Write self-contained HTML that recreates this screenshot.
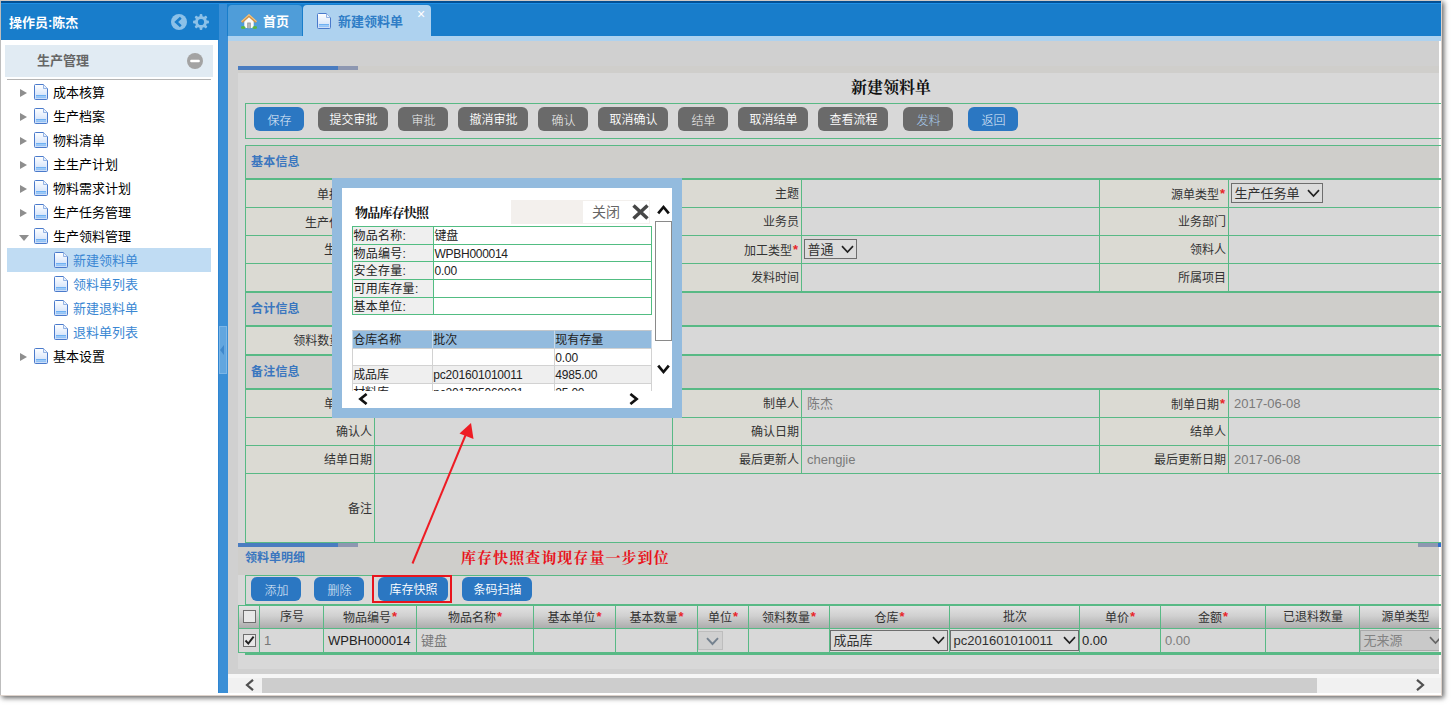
<!DOCTYPE html>
<html lang="zh-CN">
<head>
<meta charset="utf-8">
<title>新建领料单</title>
<style>
*{box-sizing:border-box;margin:0;padding:0}
html,body{width:1451px;height:705px;overflow:hidden;background:#fff}
body{font-family:"Liberation Sans","Noto Sans CJK SC",sans-serif;font-size:12px;color:#333;position:relative}
.abs{position:absolute}
#win{position:absolute;left:0;top:0;width:1442px;height:696px;background:#fff;overflow:hidden;border-right:1px solid #ddd2cb;border-bottom:1px solid #ddd2cb;box-shadow:2px 2px 5px rgba(0,0,0,.6)}
/* top frame lines */
#topline0{left:0;top:0;width:1441px;height:1px;background:#d0c9c5}
#topline1{left:0;top:1px;width:1441px;height:2px;background:#034f93}
#topline2{left:0;top:3px;width:1441px;height:1px;background:#1e8fe6}
#leftline{left:0;top:1px;width:1px;height:694px;background:#bdbdbd}
/* sidebar */
#sbhead{left:1px;top:4px;width:218px;height:36px;background:#187dcb;z-index:1}
#sbhead .t{position:absolute;left:8px;top:8.6px;font-size:13px;font-weight:bold;color:#fff;line-height:20px}
#strip{left:218px;top:4px;width:10px;height:689px;background:#3b8fd6;border-left:1px solid #2f85d1}
#stripline{left:227px;top:4px;width:2px;height:32px;background:#187dcb}
#handle{left:219px;top:326px;width:8px;height:48px;background:#62a6df;border:1px solid #7db6e6}
#acc{left:5px;top:45px;width:208px;height:32px;background:#e1ebf3}
#acc .t{position:absolute;left:32px;top:6px;font-size:13px;font-weight:bold;color:#666;line-height:20px}
#accline{left:7px;top:79px;width:204px;height:1px;background:#b5b5b5}
.tr{position:absolute;left:1px;width:217px;height:24px;font-size:13px;line-height:24px;color:#000}
.tr .ar{position:absolute;left:19px;top:7.5px;width:0;height:0;border-left:7px solid #8e8e8e;border-top:4.7px solid transparent;border-bottom:4.7px solid transparent}
.tr .ad{position:absolute;left:18px;top:9.5px;width:0;height:0;border-top:6.5px solid #8e8e8e;border-left:5px solid transparent;border-right:5px solid transparent}
.tr svg{position:absolute;top:3px}
.tr .tx{position:absolute;top:0}
.tr.l1 svg{left:33px}.tr.l1 .tx{left:52px}
.tr.l2 svg{left:53px}.tr.l2 .tx{left:72px;color:#3a87d3}
.tr.sel{left:7px;width:204px;background:#c0dcf3;margin-top:-1px}
.tr.sel svg{top:4px}.tr.sel .tx{top:1px}
.tr.sel svg{left:47px}.tr.sel .tx{left:66px}
/* tab bar */
#tabbar{left:229px;top:4px;width:1212px;height:32px;background:#187dcb}
#tabstrip{left:228px;top:36px;width:1213px;height:5px;background:#aed2ef}
#tab1{left:228px;top:5px;width:74px;height:31px;background:#4f9dd9;border-radius:4px 4px 0 0}
#tab1 .t{position:absolute;left:35px;top:6.5px;font-size:13px;font-weight:bold;color:#fff;line-height:20px}
#tab2{left:303px;top:5px;width:128px;height:32px;background:#aed2ef;border-radius:4px 4px 0 0}
#tab2 .t{position:absolute;left:35px;top:6.5px;font-size:13px;font-weight:bold;color:#2f7dc6;line-height:20px}
#tab2 .x{position:absolute;left:114px;top:1px;font-size:14px;color:#fff;line-height:16px}
/* content */
#content{left:228px;top:41px;width:1211px;height:633px;background:#d0d0d0}
#inner{left:238px;top:66px;width:1201px;height:603px;background:#d8d8d8}
/* main */
#bar1a,#bar2a{background:#4a7cc0}#bar1b,#bar2b{background:#8d97b1}
#bar1c{left:238px;top:66px;width:1201px;height:7px;background:#cfcecb}
#title{left:791px;top:76px;width:200px;text-align:center;font:bold 16px/24px "Liberation Serif","Noto Serif CJK SC",serif;color:#111}
.gb{border:1px solid #58b985}
#tb1{left:245px;top:103px;width:1200px;height:36px}
.btn{position:absolute;height:24px;border-radius:6px;color:#f2f2f2;font-size:12px;font-weight:300;line-height:27px;text-align:center;text-indent:1px}
.btn.b{background:#2b77c2}.btn.g{background:#6a6a6a}
.btn{color:#fff;font-weight:350}.btn.s{font-weight:300;line-height:29px;color:#f0f0f0}.btn.b.s{color:#e2eefa}
.sec{position:absolute;left:245px;width:1200px;background:#cfcecb;border:1px solid #58b985}
.sec span{position:absolute;left:5px;top:8px;font-size:12px;font-weight:bold;color:#3a76bf;line-height:16px;letter-spacing:0.2px}
.row{position:absolute;left:245px;width:1200px;border-top:1px solid #58b985}
.c{position:absolute;top:0;height:100%;border-left:1px solid #58b985}
.c.l{background:#dbdad3;text-align:right;padding-right:2px;padding-top:1px;font-size:12px;color:#333;width:129px}
.c.v{background:#d8d8d8;width:298px;padding-left:5px;font-size:13px;color:#7a7a7a}
.c.l i,.th i{font-style:normal;color:#e8262a;font-weight:bold;display:inline-block;width:7px;text-align:center;font-size:13px;position:relative;top:-1px}
.sl{position:absolute;border:1px solid #6e6e6e;background:#dcdcdc;font-size:13px;color:#303030;line-height:19.5px;padding-left:2.5px;height:20px}
.sl svg{position:absolute;right:2px;top:5px}
.hl{position:absolute;left:245px;width:1200px;height:2px;background:#58b985}
#grid{}
#rstrip i{position:absolute;left:0;width:2px;background:#58b985}
.th{position:absolute;top:0;height:24px;border:1px solid #58b985;border-width:1px 0 1px 1px;background:linear-gradient(#e2e2e2,#d0d0d0 45%,#adadad);text-align:center;font-size:12px;color:#333;line-height:23px;white-space:nowrap;overflow:hidden}
.td{position:absolute;top:24px;height:24px;border:1px solid #58b985;border-width:0 0 1px 1px;background:#d8d8d8;font-size:13px;line-height:23px;padding-left:4px;white-space:nowrap;overflow:hidden}
.cb{position:absolute;width:13px;height:13px;border:1px solid #6e6e6e;background:#e8e8e8}
.cb svg{position:absolute;left:0;top:0}
#pop{left:332px;top:178px;width:350px;height:240px;background:#93bbde}
#popin{position:absolute;left:10px;top:10px;width:330px;height:220px;background:#fff;overflow:hidden}
.ptitle{position:absolute;left:13px;top:14.5px;font:bold 13px/20px "Liberation Serif","Noto Serif CJK SC",serif;color:#111;letter-spacing:-0.8px}
.pbeige{position:absolute;left:169px;top:12px;width:139px;height:24px;border:1px solid #f3f0ed;border-left:72px solid #f3f0ed}
.pclose{position:absolute;left:250px;top:14px;font-size:14px;line-height:20px;color:#666}
.pt1{position:absolute;left:10px;top:38px;width:300px;height:89px;font-size:12px;color:#222}
.pt1 .r{position:absolute;left:0;width:300px;border:1px solid #52bd82;line-height:16px}
.pt1 .k{position:absolute;left:0;top:0;bottom:0;width:81px;background:#efefef;border-right:1px solid #52bd82;padding:1px 0 0 0.4px;letter-spacing:0.3px;white-space:nowrap}
.pt1 .v{position:absolute;left:81px;top:0;bottom:0;padding:1px 0 0 0.6px;white-space:nowrap;letter-spacing:-0.3px}
.pt2wrap{position:absolute;left:10px;top:142px;width:300px;height:61px;overflow:hidden;font-size:12px;color:#222}
.r2{position:absolute;left:0;width:300px}
.r2 span{position:absolute;top:0;height:100%;border:1px solid #d2d2d2;padding:1px 0 0 0.3px;line-height:16px;white-space:nowrap;letter-spacing:-0.2px;background:#fff}
.r2.alt span{background:#efefef}
.r2.h span{padding-top:1px;background:#93bbde;border-color:#c2c6ca #c9d9e8 #93bbde #c9d9e8;letter-spacing:0}
.vsb{position:absolute;left:313px;top:0;width:17px;height:203px;background:#fff}
.vsb .thumb{position:absolute;left:0;top:33px;width:17px;height:120px;border:1px solid #8a8a8a;background:#fff}
</style>
</head>
<body>
<div id="win">
<div class="abs" id="sbhead"><span class="t">操作员:陈杰</span>
<svg class="abs" style="left:170px;top:10px" width="16" height="16" viewBox="0 0 16 16"><circle cx="8" cy="8" r="8" fill="#8cc1e8"/><path d="M9.8 3.8 L5.2 8 L9.8 12.2" fill="none" stroke="#187dcb" stroke-width="2.6"/></svg>
<svg class="abs" style="left:192px;top:10px" width="16" height="16" viewBox="0 0 16 16"><g fill="#8cc1e8"><circle cx="8" cy="8" r="6"/><g id="gt"><rect x="6.6" y="0" width="2.8" height="16" rx="1"/><rect x="6.6" y="0" width="2.8" height="16" rx="1" transform="rotate(45 8 8)"/><rect x="6.6" y="0" width="2.8" height="16" rx="1" transform="rotate(90 8 8)"/><rect x="6.6" y="0" width="2.8" height="16" rx="1" transform="rotate(135 8 8)"/></g></g><circle cx="8" cy="8" r="3.1" fill="#187dcb"/></svg>
</div>
<div class="abs" id="strip"></div><div class="abs" id="stripline"></div><div class="abs" id="handle"><i style="position:absolute;left:0px;top:18px;border-right:4px solid #3f88cc;border-top:5px solid transparent;border-bottom:5px solid transparent"></i></div>
<div class="abs" id="acc"><span class="t">生产管理</span>
<svg class="abs" style="left:182px;top:8px" width="16" height="16" viewBox="0 0 16 16"><circle cx="8" cy="8" r="8" fill="#a3a3a3"/><rect x="3.2" y="6.8" width="9.6" height="2.4" rx="1" fill="#fff"/></svg>
</div>
<div class="abs" id="accline"></div>
<!--TREE-->
<svg width="0" height="0" style="position:absolute"><defs><linearGradient id="fg" x1="0" y1="0" x2="0" y2="1"><stop offset="0" stop-color="#ffffff"/><stop offset="1" stop-color="#c9dcf8"/></linearGradient><symbol id="fi" viewBox="0 0 14 16"><path d="M1.5 0.5 H9.5 L13.5 4.5 V14.5 Q13.5 15.5 12.5 15.5 H1.5 Q0.5 15.5 0.5 14.5 V1.5 Q0.5 0.5 1.5 0.5 Z" fill="url(#fg)" stroke="#4a7acb" stroke-width="1"/><path d="M9.5 0.5 V4.5 H13.5" fill="#e8f0fc" stroke="#7ea3de" stroke-width="0.8"/><rect x="2" y="11" width="10" height="2.6" fill="#6fb0f2"/><rect x="2" y="12" width="10" height="0.8" fill="#a9d2fa"/></symbol></defs></svg>
<div class="tr l1" style="top:81px"><i class="ar"></i><svg width="14" height="16"><use href="#fi"/></svg><span class="tx">成本核算</span></div>
<div class="tr l1" style="top:105px"><i class="ar"></i><svg width="14" height="16"><use href="#fi"/></svg><span class="tx">生产档案</span></div>
<div class="tr l1" style="top:129px"><i class="ar"></i><svg width="14" height="16"><use href="#fi"/></svg><span class="tx">物料清单</span></div>
<div class="tr l1" style="top:153px"><i class="ar"></i><svg width="14" height="16"><use href="#fi"/></svg><span class="tx">主生产计划</span></div>
<div class="tr l1" style="top:177px"><i class="ar"></i><svg width="14" height="16"><use href="#fi"/></svg><span class="tx">物料需求计划</span></div>
<div class="tr l1" style="top:201px"><i class="ar"></i><svg width="14" height="16"><use href="#fi"/></svg><span class="tx">生产任务管理</span></div>
<div class="tr l1" style="top:225px"><i class="ad"></i><svg width="14" height="16"><use href="#fi"/></svg><span class="tx">生产领料管理</span></div>
<div class="tr l2 sel" style="top:249px"><svg width="14" height="16"><use href="#fi"/></svg><span class="tx">新建领料单</span></div>
<div class="tr l2" style="top:273px"><svg width="14" height="16"><use href="#fi"/></svg><span class="tx">领料单列表</span></div>
<div class="tr l2" style="top:297px"><svg width="14" height="16"><use href="#fi"/></svg><span class="tx">新建退料单</span></div>
<div class="tr l2" style="top:321px"><svg width="14" height="16"><use href="#fi"/></svg><span class="tx">退料单列表</span></div>
<div class="tr l1" style="top:345px"><i class="ar"></i><svg width="14" height="16"><use href="#fi"/></svg><span class="tx">基本设置</span></div>
<!--/TREE-->
<div class="abs" id="tabbar"></div>
<div class="abs" id="tabstrip"></div>
<div class="abs" id="tab1"><svg class="abs" style="left:13px;top:9px" width="16" height="15" viewBox="0 0 16 15"><path d="M3.3 6.5 L8 2.6 L12.7 6.5 V14 H3.3 Z" fill="#fbfbfb"/><rect x="6.3" y="8.6" width="3.4" height="5.6" fill="#8a8a8a"/><rect x="7.1" y="9.3" width="1.8" height="4.9" fill="#b9b9b9"/><path d="M8 0 L16 7.2 L14.4 8.9 L8 3.3 L1.6 8.9 L0 7.2 Z" fill="#cf9247"/><path d="M8 0 L16 7.2 L15.3 8 L8 1.6 L0.7 8 L0 7.2 Z" fill="#ecc488"/><ellipse cx="2.2" cy="13.4" rx="2.4" ry="1.5" fill="#5bb545"/><ellipse cx="13.8" cy="13.4" rx="2.4" ry="1.5" fill="#5bb545"/></svg><span class="t">首页</span></div>
<div class="abs" id="tab2"><svg class="abs" style="left:14px;top:8px" width="14" height="16"><use href="#fi"/></svg><span class="t">新建领料单</span><span class="x">×</span></div>
<div class="abs" id="content"></div>
<div class="abs" id="inner"></div>
<!--MAIN-->
<div class="abs" id="bar1c"></div><div class="abs" id="bar1a" style="left:238px;top:66px;width:100px;height:4px"></div><div class="abs" id="bar1b" style="left:338px;top:66px;width:20px;height:4px"></div>
<div class="abs" id="title">新建领料单</div>
<div class="abs gb" id="tb1"></div>
<div class="btn b s" style="left:254px;top:107px;width:50px">保存</div>
<div class="btn g" style="left:318px;top:107px;width:70px">提交审批</div>
<div class="btn g s" style="left:398px;top:107px;width:50px">审批</div>
<div class="btn g" style="left:458px;top:107px;width:70px">撤消审批</div>
<div class="btn g s" style="left:538px;top:107px;width:50px">确认</div>
<div class="btn g" style="left:598px;top:107px;width:70px">取消确认</div>
<div class="btn g s" style="left:678px;top:107px;width:50px">结单</div>
<div class="btn g" style="left:738px;top:107px;width:70px">取消结单</div>
<div class="btn g" style="left:818px;top:107px;width:70px">查看流程</div>
<div class="btn g s" style="left:903px;top:107px;width:50px;color:#a9cdf0">发料</div>
<div class="btn b s" style="left:968px;top:107px;width:50px">返回</div>

<div class="sec" style="top:145px;height:34px"><span>基本信息</span></div>
<div class="row" style="top:179px;height:28px;line-height:27px"><div class="c l" style="left:0px">单据编号<i>*</i></div><div class="c v" style="left:129px;"></div><div class="c l" style="left:427px">主题</div><div class="c v" style="left:556px;"></div><div class="c l" style="left:854px">源单类型<i>*</i></div><div class="c v" style="left:983px;"><div class="sl" style="left:2px;top:3px;width:92px">生产任务单<svg width="13" height="9" viewBox="0 0 13 9"><path d="M1 1.2 L6.5 7 L12 1.2" fill="none" stroke="#222" stroke-width="1.7"/></svg></div></div></div>
<div class="row" style="top:207px;height:28px;line-height:27px"><div class="c l" style="left:0px">生产任务单<i>*</i></div><div class="c v" style="left:129px;"></div><div class="c l" style="left:427px">业务员</div><div class="c v" style="left:556px;"></div><div class="c l" style="left:854px">业务部门</div><div class="c v" style="left:983px;"></div></div>
<div class="row" style="top:235px;height:28px;line-height:27px"><div class="c l" style="left:0px">生产部门</div><div class="c v" style="left:129px;"></div><div class="c l" style="left:427px">加工类型<i>*</i></div><div class="c v" style="left:556px;"><div class="sl" style="left:2px;top:3px;width:53px">普通<svg width="13" height="9" viewBox="0 0 13 9"><path d="M1 1.2 L6.5 7 L12 1.2" fill="none" stroke="#222" stroke-width="1.7"/></svg></div></div><div class="c l" style="left:854px">领料人</div><div class="c v" style="left:983px;"></div></div>
<div class="row" style="top:263px;height:28px;line-height:27px"><div class="c l" style="left:0px">发料人</div><div class="c v" style="left:129px;"></div><div class="c l" style="left:427px">发料时间</div><div class="c v" style="left:556px;"></div><div class="c l" style="left:854px">所属项目</div><div class="c v" style="left:983px;"></div></div>
<div class="hl" style="top:291px"></div>
<div class="sec" style="top:292px;height:34px"><span>合计信息</span></div>
<div class="row" style="top:326px;height:28px;line-height:27px"><div class="c l" style="left:0px">领料数量合计:&nbsp;</div><div class="c v" style="left:129px;width:1100px;"></div></div>
<div class="hl" style="top:354px"></div>
<div class="sec" style="top:355px;height:34px"><span>备注信息</span></div>
<div class="row" style="top:389px;height:28px;line-height:27px"><div class="c l" style="left:0px">单据状态</div><div class="c v" style="left:129px;"></div><div class="c l" style="left:427px">制单人</div><div class="c v" style="left:556px;">陈杰</div><div class="c l" style="left:854px">制单日期<i>*</i></div><div class="c v" style="left:983px;">2017-06-08</div></div>
<div class="row" style="top:417px;height:28px;line-height:27px"><div class="c l" style="left:0px">确认人</div><div class="c v" style="left:129px;"></div><div class="c l" style="left:427px">确认日期</div><div class="c v" style="left:556px;"></div><div class="c l" style="left:854px">结单人</div><div class="c v" style="left:983px;"></div></div>
<div class="row" style="top:445px;height:28px;line-height:27px"><div class="c l" style="left:0px">结单日期</div><div class="c v" style="left:129px;"></div><div class="c l" style="left:427px">最后更新人</div><div class="c v" style="left:556px;">chengjie</div><div class="c l" style="left:854px">最后更新日期</div><div class="c v" style="left:983px;">2017-06-08</div></div>
<div class="row" style="top:473px;height:70px;line-height:69px"><div class="c l" style="left:0px">备注</div><div class="c v" style="left:129px;width:1100px;"></div></div>
<div class="row" style="top:542px;height:1px"></div>
<div class="abs" id="dhead" style="left:238px;top:543px;width:1201px;height:32px;background:#cfcecb"><span style="position:absolute;left:7px;top:7px;font-size:12px;font-weight:bold;color:#3a76bf;line-height:16px">领料单明细</span></div>
<div class="abs" id="bar2a" style="left:238px;top:543px;width:100px;height:4px"></div><div class="abs" id="bar2b" style="left:338px;top:543px;width:20px;height:4px"></div>

<div class="abs" id="note" style="left:461px;top:546.6px;font:bold 15px/22px 'Liberation Serif','Noto Serif CJK SC',serif;color:#e8141c;letter-spacing:1.05px;white-space:nowrap">库存快照查询现存量一步到位</div>
<div class="abs gb" style="left:245px;top:575px;width:1200px;height:30px;background:#d8d8d8"></div>
<div class="btn b s" style="left:251px;top:577px;width:50px">添加</div>
<div class="btn b s" style="left:314px;top:577px;width:50px">删除</div>
<div class="btn b" style="left:378px;top:577px;width:70px">库存快照</div>
<div class="btn b" style="left:462px;top:577px;width:70px">条码扫描</div>
<div class="abs" style="left:372px;top:575px;width:80px;height:28px;border:2px solid #e8141c"></div>
<div class="abs" id="grid" style="left:238px;top:605px;width:1210px;height:48px">
<div class="th" style="left:0px;width:22px"></div>
<div class="th" style="left:21px;width:65px">序号</div>
<div class="th" style="left:85px;width:94px">物品编号<i>*</i></div>
<div class="th" style="left:178px;width:118px">物品名称<i>*</i></div>
<div class="th" style="left:295px;width:83px">基本单位<i>*</i></div>
<div class="th" style="left:377px;width:83px">基本数量<i>*</i></div>
<div class="th" style="left:459px;width:52px">单位<i>*</i></div>
<div class="th" style="left:510px;width:82px">领料数量<i>*</i></div>
<div class="th" style="left:591px;width:121px">仓库<i>*</i></div>
<div class="th" style="left:711px;width:131px">批次</div>
<div class="th" style="left:841px;width:82px">单价<i>*</i></div>
<div class="th" style="left:922px;width:106px">金额<i>*</i></div>
<div class="th" style="left:1027px;width:95px">已退料数量</div>
<div class="th" style="left:1121px;width:92px">源单类型</div>
<div class="td" style="left:0px;width:22px"></div>
<div class="td" style="left:21px;width:65px"><span style="color:#777">1</span></div>
<div class="td" style="left:85px;width:94px"><span style="color:#222">WPBH000014</span></div>
<div class="td" style="left:178px;width:118px"><span style="color:#777">键盘</span></div>
<div class="td" style="left:295px;width:83px"></div>
<div class="td" style="left:377px;width:83px"></div>
<div class="td" style="left:459px;width:52px"></div>
<div class="td" style="left:510px;width:82px"></div>
<div class="td" style="left:591px;width:121px"></div>
<div class="td" style="left:711px;width:131px"></div>
<div class="td" style="left:841px;width:82px"><span style="color:#222;margin-left:-2px">0.00</span></div>
<div class="td" style="left:922px;width:106px"><span style="color:#7d7d7d">0.00</span></div>
<div class="td" style="left:1027px;width:95px"></div>
<div class="td" style="left:1121px;width:92px"></div>
<div class="cb" style="left:5px;top:5px"></div>
<div class="cb" style="left:5px;top:29px"><svg width="11" height="11" viewBox="0 0 11 11"><path d="M1.5 5.5 L4.3 8.6 L9.6 1.6" fill="none" stroke="#222" stroke-width="1.9"/></svg></div>
<div class="sl" style="left:460px;top:26px;width:25px;height:19px;background:#d0d0d0;border-color:#bdbdbd"><svg style="right:3px;top:5px" width="13" height="9" viewBox="0 0 13 9"><path d="M1 1.2 L6.5 7 L12 1.2" fill="none" stroke="#75828f" stroke-width="1.9"/></svg></div>
<div class="sl" style="left:592px;top:25px;width:118px;height:21px;line-height:19px;background:#dcdcdc">成品库<svg width="13" height="9" viewBox="0 0 13 9"><path d="M1 1.2 L6.5 7 L12 1.2" fill="none" stroke="#222" stroke-width="1.7"/></svg></div>
<div class="sl" style="left:712px;top:25px;width:129px;height:21px;line-height:19px;background:#dcdcdc">pc201601010011<svg width="13" height="9" viewBox="0 0 13 9"><path d="M1 1.2 L6.5 7 L12 1.2" fill="none" stroke="#222" stroke-width="1.7"/></svg></div>
<div class="sl" style="left:1122px;top:25px;width:95px;height:21px;line-height:19px;background:#c9c9c9;border-color:#aaa;color:#838383">无来源<svg style="right:12px" width="13" height="9" viewBox="0 0 13 9"><path d="M1 1.2 L6.5 7 L12 1.2" fill="none" stroke="#666" stroke-width="1.7"/></svg></div>
</div>
<div class="hl" style="top:653px;height:2px"></div>
<div class="abs" id="hsb" style="left:228px;top:674px;width:1213px;height:19px;background:#f1f1f1;border-top:4px solid #f6f6f6"><div style="position:absolute;left:34px;top:0;width:1055px;height:15px;background:#cdcdcd"></div><svg style="position:absolute;left:17px;top:1px" width="9" height="12" viewBox="0 0 9 12"><path d="M8 0.8 L2 6 L8 11.2" fill="none" stroke="#505050" stroke-width="2.2"/></svg><svg style="position:absolute;left:1188px;top:1px" width="9" height="12" viewBox="0 0 9 12"><path d="M1 0.8 L7 6 L1 11.2" fill="none" stroke="#505050" stroke-width="2.2"/></svg></div>
<svg class="abs" style="left:400px;top:415px" width="90" height="155" viewBox="400 415 90 155"><line x1="412.5" y1="563.5" x2="466" y2="434" stroke="#ee1c24" stroke-width="2"/><path d="M471 423 L459.5 433.5 L473.5 439 Z" fill="#ee1c24"/></svg>
<div class="abs" id="pop">
<div id="popin">
<div class="ptitle">物品库存快照</div>
<div class="pbeige"></div>
<div class="pclose">关闭</div>
<svg class="abs" style="left:290px;top:16px" width="17" height="16" viewBox="0 0 17 16"><path d="M1.5 1.5 L15.5 14.5 M15.5 1.5 L1.5 14.5" stroke="#464646" stroke-width="3.5" fill="none"/></svg>
<div class="pt1"><div class="r" style="top:0px;height:19px"><span class="k">物品名称:</span><span class="v">键盘</span></div><div class="r" style="top:18px;height:18px"><span class="k">物品编号:</span><span class="v">WPBH000014</span></div><div class="r" style="top:35px;height:19px"><span class="k">安全存量:</span><span class="v">0.00</span></div><div class="r" style="top:53px;height:19px"><span class="k">可用库存量:</span><span class="v"></span></div><div class="r" style="top:71px;height:18px"><span class="k">基本单位:</span><span class="v"></span></div></div>
<div class="pt2wrap"><div class="r2 h" style="top:0px;height:19px"><span style="left:0;width:81px">仓库名称</span><span style="left:80px;width:123px">批次</span><span style="left:202px;width:98px">现有存量</span></div><div class="r2 " style="top:18px;height:18px"><span style="left:0;width:81px"></span><span style="left:80px;width:123px"></span><span style="left:202px;width:98px">0.00</span></div><div class="r2 alt" style="top:35px;height:19px"><span style="left:0;width:81px">成品库</span><span style="left:80px;width:123px">pc201601010011</span><span style="left:202px;width:98px">4985.00</span></div><div class="r2 " style="top:53px;height:19px"><span style="left:0;width:81px">材料库</span><span style="left:80px;width:123px">pc201705060021</span><span style="left:202px;width:98px">25.00</span></div></div>
<div class="vsb"><svg style="position:absolute;left:2px;top:15px" width="13" height="12" viewBox="0 0 13 12"><path d="M1.2 10.4 L6.5 4 L11.8 10.4" fill="none" stroke="#111" stroke-width="2.7"/></svg><div class="thumb"></div><svg style="position:absolute;left:2px;top:176px" width="13" height="12" viewBox="0 0 13 12"><path d="M1.2 1.6 L6.5 8 L11.8 1.6" fill="none" stroke="#111" stroke-width="2.7"/></svg></div>
<svg class="abs" style="left:16px;top:205px" width="10" height="12" viewBox="0 0 10 12"><path d="M8.6 1 L2.4 6 L8.6 11" fill="none" stroke="#111" stroke-width="2.7"/></svg>
<svg class="abs" style="left:287px;top:205px" width="10" height="12" viewBox="0 0 10 12"><path d="M1.4 1 L7.6 6 L1.4 11" fill="none" stroke="#111" stroke-width="2.7"/></svg>
</div>
</div>

<!--/MAIN-->
<div class="abs" id="rstrip" style="left:1439px;top:41px;width:2px;height:633px;background:#fff"><i style="top:62px;height:1px"></i><i style="top:97px;height:1px"></i><i style="top:104px;height:1px"></i><i style="top:137px;height:2px"></i><i style="top:166px;height:1px"></i><i style="top:194px;height:1px"></i><i style="top:222px;height:1px"></i><i style="top:250px;height:2px"></i><i style="top:285px;height:1px"></i><i style="top:313px;height:2px"></i><i style="top:348px;height:1px"></i><i style="top:376px;height:1px"></i><i style="top:404px;height:1px"></i><i style="top:432px;height:1px"></i><i style="top:501px;height:1px"></i><i style="top:534px;height:1px"></i><i style="top:563px;height:2px"></i><i style="top:587px;height:1px"></i><i style="top:611px;height:3px"></i></div><div class="abs" style="left:1418px;top:543px;width:20px;height:4px;background:#8d97b1"></div><div class="abs" style="left:1438px;top:543px;width:3px;height:4px;background:#2f6fd0"></div><div class="abs" id="topline0"></div><div class="abs" id="topline1"></div><div class="abs" id="topline2"></div><div class="abs" id="leftline"></div>
</div>
</body>
</html>
